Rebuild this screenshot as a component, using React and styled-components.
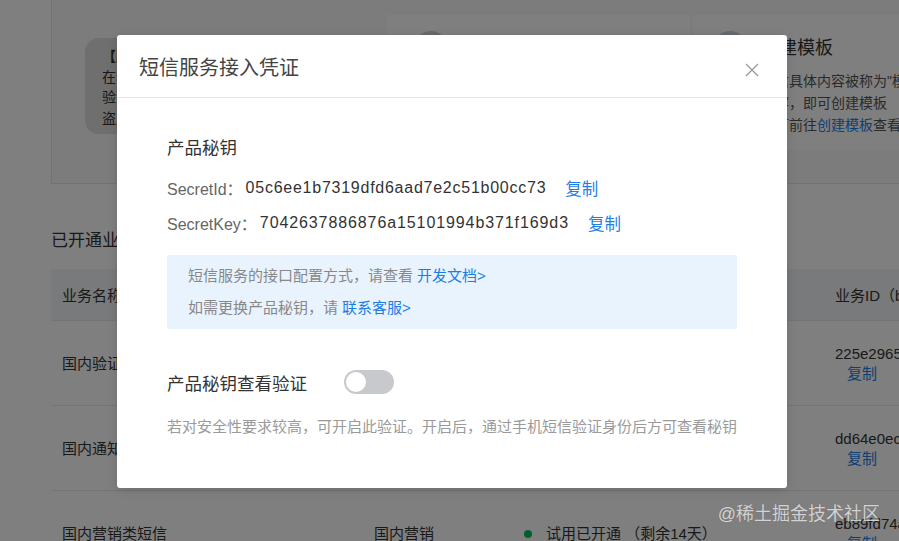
import styled, { createGlobalStyle } from "styled-components";

const GlobalStyle = createGlobalStyle`
  html, body {
    margin: 0;
    padding: 0;
    background: #fff;
  }
  body {
    font-family: "Liberation Sans", "Noto Sans CJK SC", sans-serif;
    color: #333;
    overflow: hidden;
  }
`;

const Page = styled.div`
  position: relative;
  width: 899px;
  height: 541px;
  overflow: hidden;
  background: #fff;
`;

/* ---------- page behind the dialog ---------- */

const TopSection = styled.div`
  margin-left: 51px;
  height: 184px;
  box-sizing: border-box;
  border-left: 1px solid #e6e6e6;
  border-bottom: 1px solid #e6e6e6;
  background: #f8f8f8;
  display: flex;
  gap: 3px;
  padding: 15px 0 0 0;
`;

const GuideCard = styled.div`
  width: ${(p) => p.$w}px;
  height: 135px;
  box-sizing: border-box;
  background: ${(p) => (p.$plain ? "transparent" : "#fff")};
  padding: ${(p) => p.$pad};
  display: flex;
  gap: 14px;
`;

const Bubble = styled.div`
  position: relative;
  width: 250px;
  height: 96px;
  margin-top: 23px;
  border-radius: 14px;
  background: #dedede;
  box-sizing: border-box;
  padding: 8px 0 0 17px;
  font-size: 14px;
  line-height: 20.5px;
  color: #333;
  white-space: nowrap;
  overflow: hidden;
  &::after {
    content: "";
    position: absolute;
    left: 0;
    bottom: -6px;
    width: 14px;
    height: 14px;
    background: #dedede;
    border-bottom-left-radius: 3px;
  }
`;

const StepIcon = styled.div`
  width: 34px;
  height: 34px;
  border-radius: 50%;
  background: #cfd6e0;
  margin-top: 16px;
  flex-shrink: 0;
`;

const CardText = styled.div`
  display: flex;
  flex-direction: column;
  white-space: nowrap;
`;

const CardTitle = styled.div`
  font-size: 18px;
  line-height: 26px;
  margin: 20px 0 9px;
  color: #333;
`;

const CardLine = styled.div`
  font-size: 14px;
  line-height: 22px;
  color: #555;
`;

const PageLink = styled.span`
  color: #1a7ee6;
`;

const Section = styled.div`
  margin-left: 51px;
`;

const SectionHeading = styled.div`
  font-size: 17px;
  line-height: 24px;
  margin: 45px 0 16px;
  color: #333;
`;

const TableRow = styled.div`
  display: grid;
  grid-template-columns: 312px 150px 311px 1fr;
  height: ${(p) => (p.$head ? 52 : 85)}px;
  box-sizing: border-box;
  background: ${(p) => (p.$head ? "#f3f4f6" : "#fff")};
  border-bottom: 1px solid #e8e8e8;
  font-size: 15px;
  color: #333;
`;

const Cell = styled.div`
  display: flex;
  flex-direction: column;
  justify-content: center;
  padding: 2px 0 0 11px;
  line-height: 20px;
  white-space: nowrap;
  overflow: hidden;
`;

const IdCopy = styled.span`
  color: #1a7ee6;
  padding-left: 12px;
`;

const Status = styled.div`
  display: flex;
  align-items: center;
  gap: 14px;
  &::before {
    content: "";
    width: 8px;
    height: 8px;
    border-radius: 50%;
    background: #0abf5b;
  }
`;

/* ---------- dialog ---------- */

const Overlay = styled.div`
  position: absolute;
  inset: 0;
  background: rgba(0, 0, 0, 0.5);
  display: flex;
  align-items: flex-start;
  padding: 35px 0 0 117px;
  box-sizing: border-box;
`;

const Modal = styled.div`
  width: 670px;
  height: 453px;
  background: #fff;
  border-radius: 3px;
  box-shadow: 0 2px 10px rgba(0, 0, 0, 0.15);
  display: flex;
  flex-direction: column;
`;

const ModalHeader = styled.div`
  height: 63px;
  box-sizing: border-box;
  border-bottom: 1px solid #e8e8e8;
  display: flex;
  align-items: center;
  justify-content: space-between;
  padding: 0 28px 0 22px;
`;

const ModalTitle = styled.div`
  font-size: 20px;
  color: #444;
`;

const CloseButton = styled.button`
  border: 0;
  background: none;
  padding: 0;
  margin-top: 8px;
  width: 14px;
  height: 14px;
  display: flex;
  cursor: pointer;
`;

const ModalBody = styled.div`
  padding: 39px 50px 0;
`;

const BlockTitle = styled.div`
  font-size: 17.5px;
  line-height: 22px;
  color: #333;
`;

const KeyList = styled.div`
  margin-top: 11px;
`;

const KeyRow = styled.div`
  display: flex;
  align-items: center;
  height: 35px;
  font-size: 16px;
  white-space: nowrap;
`;

const KeyLabel = styled.span`
  color: #666;
  margin-right: 3px;
`;

const KeyValue = styled.span`
  color: #333;
  letter-spacing: ${(p) => p.$spacing}px;
`;

const CopyLink = styled.a`
  color: #1f7fe4;
  font-size: 16.5px;
  margin-left: 19px;
  cursor: pointer;
`;

const InfoBox = styled.div`
  margin-top: 15px;
  background: #e8f3fe;
  border-radius: 2px;
  padding: 5px 21px 5px;
  font-size: 15px;
  line-height: 32px;
  color: #888;
`;

const InfoLink = styled.a`
  color: #1a7ee6;
  margin-left: 4px;
  cursor: pointer;
`;

const VerifyRow = styled.div`
  margin-top: 41px;
  display: flex;
  align-items: center;
  gap: 37px;
  height: 24px;
`;

const VerifyLabel = styled.div`
  font-size: 17.5px;
  color: #333;
`;

const Toggle = styled.div`
  width: 50px;
  height: 24px;
  border-radius: 12px;
  background: ${(p) => (p.$on ? "#1a7ee6" : "#c8c9cd")};
  position: relative;
  &::after {
    content: "";
    position: absolute;
    top: 2px;
    left: ${(p) => (p.$on ? 28 : 2)}px;
    width: 20px;
    height: 20px;
    border-radius: 50%;
    background: #fff;
  }
`;

const Hint = styled.div`
  margin-top: 23px;
  font-size: 15px;
  line-height: 20px;
  color: #9a9a9a;
  white-space: nowrap;
`;

const Watermark = styled.div`
  position: absolute;
  right: 19px;
  bottom: 16px;
  font-size: 18px;
  color: rgba(255, 255, 255, 0.72);
  text-shadow: 0 0 1px rgba(0, 0, 0, 0.25);
  pointer-events: none;
`;

const rows = [
  { name: "国内验证码短信", type: "国内验证码", status: "试用已开通 （剩余14天）", id: "225e2965c8a24e1b" },
  { name: "国内通知类短信", type: "国内通知", status: "试用已开通 （剩余14天）", id: "dd64e0ec7f3b41a9" },
  { name: "国内营销类短信", type: "国内营销", status: "试用已开通 （剩余14天）", id: "eb89fd74a0c6e2d3" },
];

const CloseIcon = () => (
  <svg width="14" height="14" viewBox="0 0 14 14">
    <path d="M1 1L13 13M13 1L1 13" stroke="#999" strokeWidth="1.3" fill="none" />
  </svg>
);

export default function App() {
  return (
    <Page>
      <GlobalStyle />
      <TopSection>
        <GuideCard $w={333} $plain $pad="0 0 0 33px">
          <Bubble>
            <div>
              <b>【</b>腾讯云】您的验证码是：4567，
            </div>
            <div>在5分钟内有效。如非本人操作，</div>
            <div>验证码请勿泄露给他人，谨防被</div>
            <div>盗用。</div>
          </Bubble>
        </GuideCard>
        <GuideCard $w={305} $pad="0 0 0 28px">
          <StepIcon />
          <CardText>
            <CardTitle>创建签名</CardTitle>
            <CardLine>短信发送方的署名被称为"签名"</CardLine>
            <CardLine>填写签名内容，即可创建签名</CardLine>
          </CardText>
        </GuideCard>
        <GuideCard $w={206} $pad="0 0 0 20px">
          <StepIcon />
          <CardText>
            <CardTitle>创建模板</CardTitle>
            <CardLine>短信具体内容被称为"模板"</CardLine>
            <CardLine>内容，即可创建模板</CardLine>
            <CardLine>
              您可前往<PageLink>创建模板</PageLink>查看
            </CardLine>
          </CardText>
        </GuideCard>
      </TopSection>

      <Section>
        <SectionHeading>已开通业务</SectionHeading>
        <TableRow $head>
          <Cell>业务名称</Cell>
          <Cell>业务类型</Cell>
          <Cell>状态</Cell>
          <Cell>业务ID（bizId）</Cell>
        </TableRow>
        {rows.map((r) => (
          <TableRow key={r.name}>
            <Cell>{r.name}</Cell>
            <Cell>{r.type}</Cell>
            <Cell>
              <Status>{r.status}</Status>
            </Cell>
            <Cell>
              <span>{r.id}</span>
              <IdCopy>复制</IdCopy>
            </Cell>
          </TableRow>
        ))}
      </Section>

      <Overlay>
        <Modal>
          <ModalHeader>
            <ModalTitle>短信服务接入凭证</ModalTitle>
            <CloseButton aria-label="关闭">
              <CloseIcon />
            </CloseButton>
          </ModalHeader>
          <ModalBody>
            <BlockTitle>产品秘钥</BlockTitle>
            <KeyList>
              <KeyRow>
                <KeyLabel>SecretId：</KeyLabel>
                <KeyValue $spacing={0.75}>05c6ee1b7319dfd6aad7e2c51b00cc73</KeyValue>
                <CopyLink>复制</CopyLink>
              </KeyRow>
              <KeyRow>
                <KeyLabel>SecretKey：</KeyLabel>
                <KeyValue $spacing={0.9}>7042637886876a15101994b371f169d3</KeyValue>
                <CopyLink>复制</CopyLink>
              </KeyRow>
            </KeyList>
            <InfoBox>
              <div>
                短信服务的接口配置方式，请查看<InfoLink>开发文档&gt;</InfoLink>
              </div>
              <div>
                如需更换产品秘钥，请<InfoLink>联系客服&gt;</InfoLink>
              </div>
            </InfoBox>
            <VerifyRow>
              <VerifyLabel>产品秘钥查看验证</VerifyLabel>
              <Toggle />
            </VerifyRow>
            <Hint>若对安全性要求较高，可开启此验证。开启后，通过手机短信验证身份后方可查看秘钥</Hint>
          </ModalBody>
        </Modal>
      </Overlay>
      <Watermark>@稀土掘金技术社区</Watermark>
    </Page>
  );
}
